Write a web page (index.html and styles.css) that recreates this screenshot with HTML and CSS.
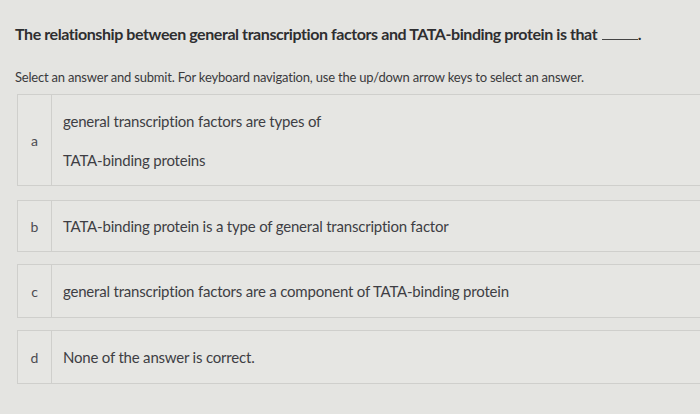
FILE: index.html
```html
<!DOCTYPE html>
<html lang="en">
<head>
<meta charset="utf-8">
<link rel="stylesheet" href="styles.css">
</head>
<body>
<main class="page">
  <h1 class="question">The relationship between general transcription factors and TATA-binding protein is that <span class="blank"></span>.</h1>
  <p class="hint">Select an answer and submit. For keyboard navigation, use the up/down arrow keys to select an answer.</p>
  <ul class="options">
    <li class="option option-tall">
      <span class="letter">a</span>
      <div class="answer">
        <p>general transcription factors are types of</p>
        <p>TATA-binding proteins</p>
      </div>
    </li>
    <li class="option option-short">
      <span class="letter">b</span>
      <div class="answer"><p>TATA-binding protein is a type of general transcription factor</p></div>
    </li>
    <li class="option">
      <span class="letter">c</span>
      <div class="answer"><p>general transcription factors are a component of TATA-binding protein</p></div>
    </li>
    <li class="option">
      <span class="letter">d</span>
      <div class="answer"><p>None of the answer is correct.</p></div>
    </li>
  </ul>
</main>
</body>
</html>
```
FILE: styles.css
```css
html, body {
  margin: 0;
  padding: 0;
}
body {
  background: #e4e4e1;
  font-family: Lato, "Noto Sans", sans-serif;
  color: #3d3d3f;
  overflow: hidden;
}
.page {
  padding: 24px 0 0 15px;
}
.question {
  margin: 0;
  font-size: 16px;
  font-weight: 700;
  color: #2e2e30;
  line-height: 20px;
  letter-spacing: -0.42px;
}
.blank {
  display: inline-block;
  width: 36px;
  border-bottom: 1px solid #444;
  margin-left: 1px;
}
.hint {
  margin: 25px 0 0 0;
  font-size: 13px;
  line-height: 16px;
  color: #3a3a3c;
  letter-spacing: -0.2px;
}
.options {
  list-style: none;
  margin: 9px -20px 0 2px;
  padding: 0;
  display: flex;
  flex-direction: column;
  gap: 12px;
}
.option {
  display: flex;
  border: 1px solid #cfcfcc;
  border-right: none;
  background: #e6e6e3;
  min-height: 52px;
}
.option-short {
  min-height: 50px;
}
.option-tall {
  min-height: 90px;
  margin-bottom: 2px;
}
.letter {
  width: 33px;
  flex: none;
  display: flex;
  align-items: center;
  justify-content: center;
  border-right: 1px solid #cfcfcc;
  font-size: 14px;
  color: #4c4c52;
}
.answer {
  display: flex;
  flex-direction: column;
  justify-content: center;
  padding: 0 11px;
  font-size: 15px;
  color: #3e3e44;
  letter-spacing: -0.2px;
}
.answer p {
  margin: 0;
  line-height: 20px;
}
.option-tall .answer p + p {
  margin-top: 19px;
}
```
